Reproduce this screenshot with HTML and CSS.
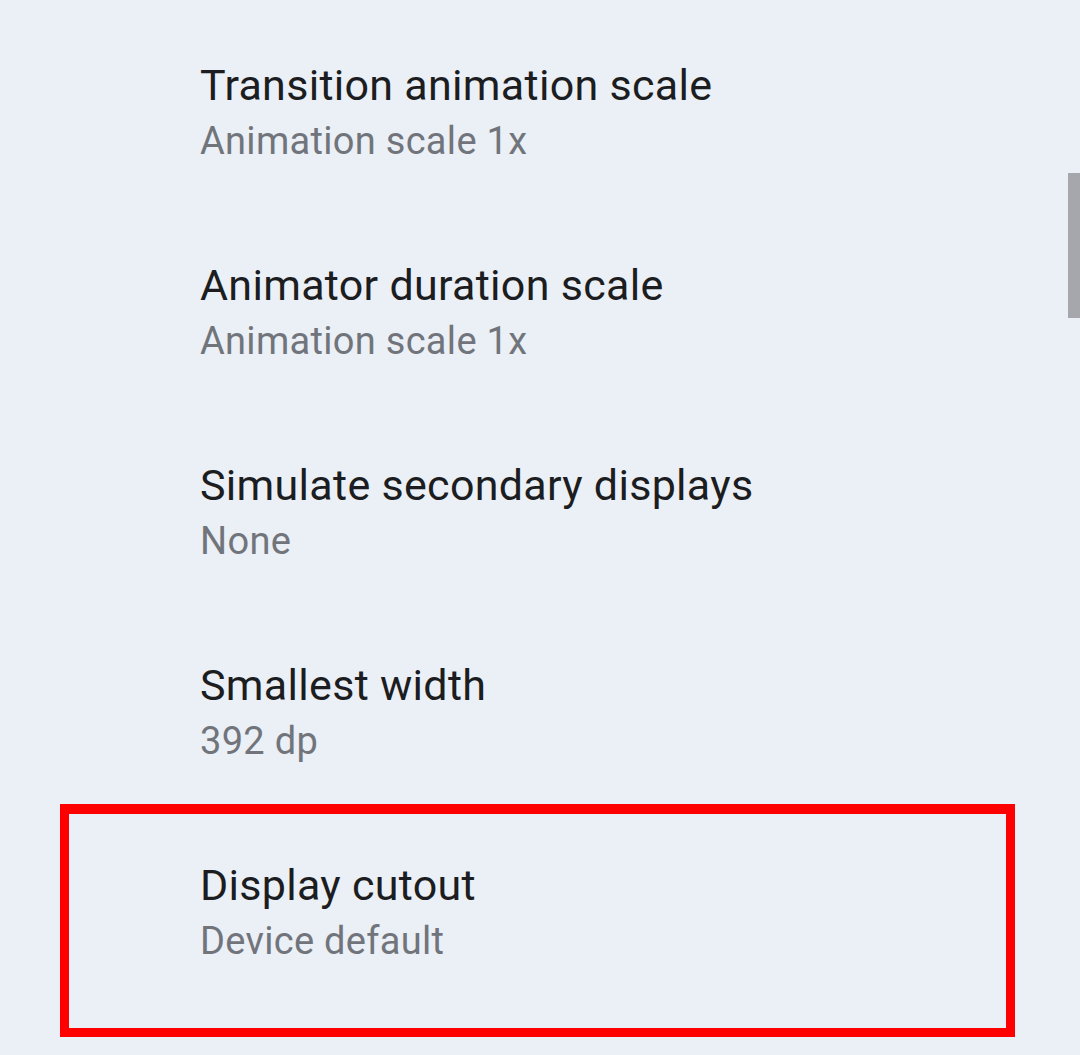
FILE: index.html
```html
<!DOCTYPE html>
<html lang="en">
  <head>
    <meta charset="UTF-8" />
    <meta name="viewport" content="width=device-width, initial-scale=1.0" />
    <title>Developer options</title>
    <link rel="stylesheet" href="styles.css">
  </head>
  <body>
    <div class="list">
      <div class="item">
        <div class="title">Transition animation scale</div>
        <div class="summary">Animation scale 1x</div>
      </div>
      <div class="item">
        <div class="title">Animator duration scale</div>
        <div class="summary">Animation scale 1x</div>
      </div>
      <div class="item">
        <div class="title">Simulate secondary displays</div>
        <div class="summary">None</div>
      </div>
      <div class="item">
        <div class="title">Smallest width</div>
        <div class="summary">392 dp</div>
      </div>
      <!-- 강조 표시된 항목 -->
      <div class="highlight">
        <div class="item">
          <div class="title">Display cutout</div>
          <div class="summary">Device default</div>
        </div>
      </div>
    </div>
    <div class="scrollbar"></div>
  </body>
</html>
```

FILE: styles.css
```css
html {
  background-color: #ebeff6;
  height: 100%;
}
body {
  margin: 0;
  font-family: Roboto, "Noto Sans", sans-serif;
  overflow: hidden;
  height: 100%;
}
.list {
  display: flex;
  flex-direction: column;
}
.item {
  box-sizing: border-box;
  height: 200px;
  padding: 60px 0 0 200px;
}
.title {
  font-size: 43px;
  line-height: 50px;
  color: #1c1d21;
  letter-spacing: 0.3px;
}
.summary {
  margin-top: 7px;
  font-size: 38px;
  line-height: 48px;
  color: #71757b;
  letter-spacing: 0.3px;
}
.highlight {
  margin: 4px 65px 0 60px;
  border: 9px solid #ff0000;
  border-top-width: 10px;
  height: 214px;
}
.highlight .item {
  padding: 46px 0 0 131px;
}
.scrollbar {
  position: absolute;
  right: 0;
  top: 173px;
  width: 12px;
  height: 145px;
  background-color: #a5a7ac;
}
```
